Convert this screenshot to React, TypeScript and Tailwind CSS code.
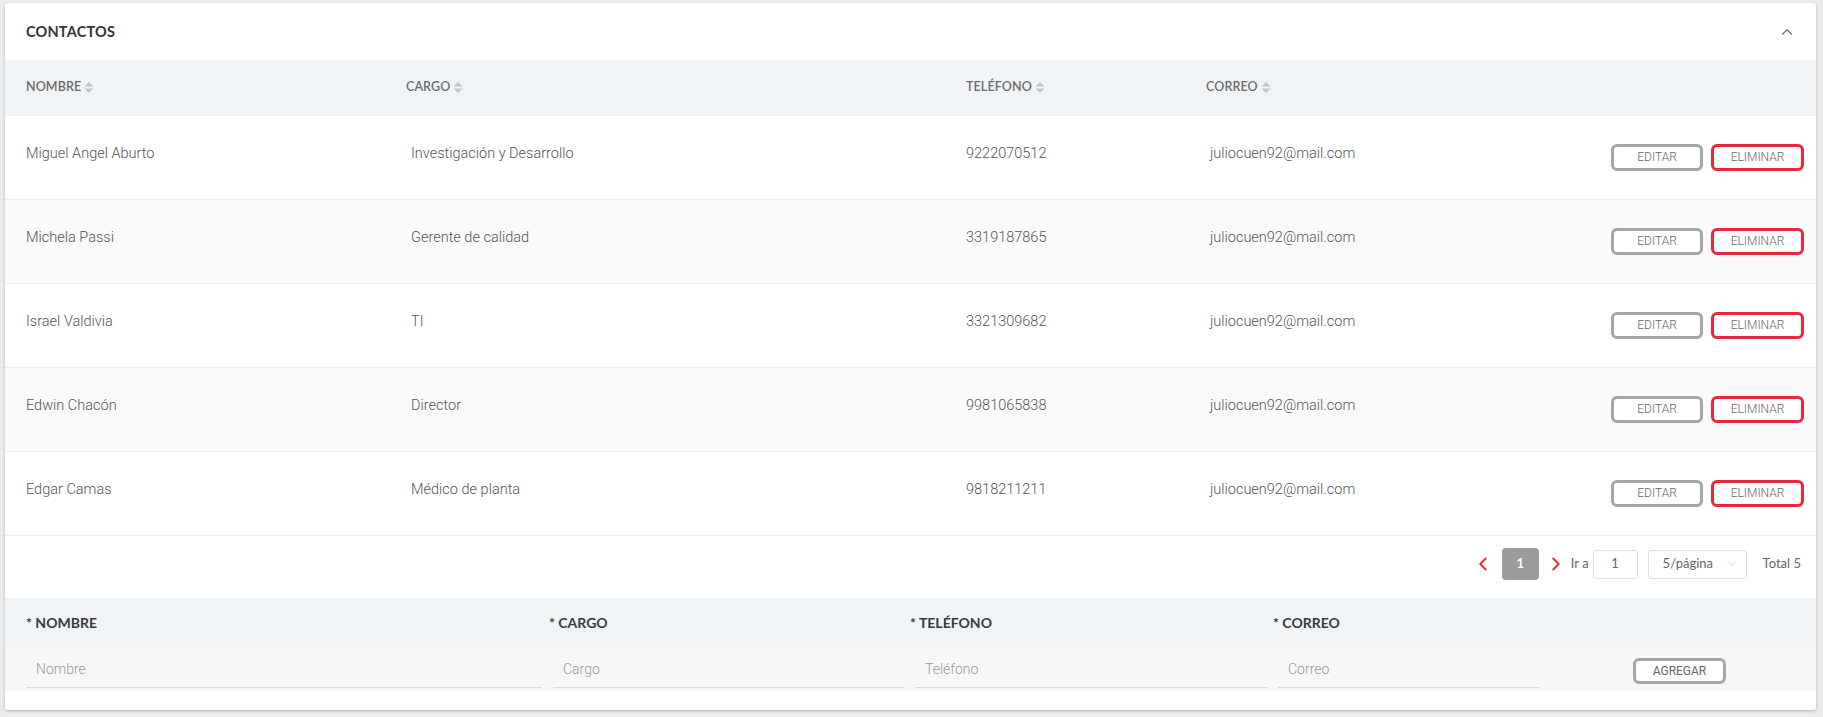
import { ChevronUp, ChevronLeft, ChevronRight, ChevronDown } from "lucide-react";

const contacts = [
  { name: "Miguel Angel Aburto", role: "Investigación y Desarrollo", phone: "9222070512", email: "juliocuen92@mail.com" },
  { name: "Michela Passi", role: "Gerente de calidad", phone: "3319187865", email: "juliocuen92@mail.com" },
  { name: "Israel Valdivia", role: "TI", phone: "3321309682", email: "juliocuen92@mail.com" },
  { name: "Edwin Chacón", role: "Director", phone: "9981065838", email: "juliocuen92@mail.com" },
  { name: "Edgar Camas", role: "Médico de planta", phone: "9818211211", email: "juliocuen92@mail.com" },
];

const cols = "grid grid-cols-[380px_560px_240px_1fr_auto]";

function SortIcon() {
  return (
    <svg width="10" height="13" viewBox="0 0 10 13" className="ml-[3px]">
      <path d="M5 1 L9.5 5.5 L0.5 5.5 Z" fill="#c0c4cc" />
      <path d="M5 12 L9.5 7.5 L0.5 7.5 Z" fill="#c0c4cc" />
    </svg>
  );
}

function HeadCell({ label }: { label: string }) {
  return (
    <div className="flex items-center text-[12.5px] font-semibold text-[#6b6b6b] tracking-[0.1px]">
      {label}
      <SortIcon />
    </div>
  );
}

function FormField({ placeholder, className }: { placeholder: string; className: string }) {
  return (
    <div className={`${className} h-[40px] border-b border-[#dcdcdc] flex items-center pl-[10px] pt-[4px]`}>
      <input
        placeholder={placeholder}
        className="w-full bg-transparent outline-none text-[14px] font-light text-[#555] placeholder:text-[#9a9a9a]"
      />
    </div>
  );
}

export default function App() {
  return (
    <div className="min-h-[717px] w-full bg-[#ebebeb] pt-[3px] pl-[5px] pr-[7px] pb-[6px] font-['Roboto',sans-serif]">
      <div className="bg-white rounded-[3px] shadow-[0_1px_3px_rgba(0,0,0,0.25)] overflow-hidden">
        {/* title */}
        <div className="h-[57px] flex items-center justify-between pl-[21px] pr-[20px]">
          <h2 className="font-['Lato',sans-serif] font-bold text-[14.5px] text-[#333] tracking-[0.2px]">CONTACTOS</h2>
          <ChevronUp size={18} strokeWidth={1.5} className="text-[#6a6a6a]" />
        </div>

        {/* table head */}
        <div className={`${cols} h-[55px] items-center bg-[#f1f4f7] pl-[21px] font-['Lato',sans-serif]`}>
          <HeadCell label="NOMBRE" />
          <HeadCell label="CARGO" />
          <HeadCell label="TELÉFONO" />
          <HeadCell label="CORREO" />
          <div />
        </div>

        {/* rows */}
        {contacts.map((c, i) => (
          <div
            key={i}
            className={`${cols} h-[84px] items-center border-t border-[#ebeef5] pl-[21px] pr-[12px] text-[14.5px] font-light text-[#555] ${
              i % 2 === 1 ? "bg-[#fafafa]" : "bg-white"
            }`}
          >
            <span className="pb-[8px]">{c.name}</span>
            <span className="pb-[8px] pl-[5px]">{c.role}</span>
            <span className="pb-[8px]">{c.phone}</span>
            <span className="pb-[8px] pl-[4px]">{c.email}</span>
            <div className="flex gap-[8px] pb-[1px]">
              <button className="w-[92px] h-[27px] rounded-[6px] border-[3px] border-[#a6a6a6] text-[12px] font-light text-[#666] bg-white">
                EDITAR
              </button>
              <button className="w-[93px] h-[27px] rounded-[6px] border-[3px] border-[#e8283c] text-[12px] font-light text-[#666] bg-white">
                ELIMINAR
              </button>
            </div>
          </div>
        ))}

        {/* pagination */}
        <div className="h-[63px] border-t border-[#ebeef5] flex items-center justify-end pr-[15px] pb-[6px] text-[13px] text-[#666] font-['Lato',sans-serif]">
          <ChevronLeft size={22} strokeWidth={2} className="text-[#e8283c]" />
          <div className="ml-[8px] w-[37px] h-[32px] rounded-[4px] bg-[#9b9b9b] text-white font-bold flex items-center justify-center">
            1
          </div>
          <ChevronRight size={22} strokeWidth={2} className="ml-[6px] text-[#e8283c]" />
          <span className="ml-[4px]">Ir a</span>
          <div className="ml-[4px] w-[45px] h-[29px] border border-[#dcdfe6] rounded-[3px] flex items-center justify-center">
            1
          </div>
          <div className="ml-[10px] w-[99px] h-[29px] border border-[#dcdfe6] rounded-[3px] flex items-center justify-between pl-[14px] pr-[8px]">
            <span>5/página</span>
            <ChevronDown size={12} strokeWidth={1.2} className="text-[#b0b0b0]" />
          </div>
          <span className="ml-[16px]">Total 5</span>
        </div>

        {/* form head */}
        <div className="grid grid-cols-[523px_361px_363px_1fr] h-[49px] items-center bg-[#f1f4f7] pl-[21px] font-['Lato',sans-serif] font-bold text-[14px] text-[#3a3a3a]">
          <span>* NOMBRE</span>
          <span>* CARGO</span>
          <span>* TELÉFONO</span>
          <span>* CORREO</span>
        </div>

        {/* form inputs */}
        <div className="h-[44px] bg-[#f7f7f7] flex items-start pt-[1px] pl-[21px]">
          <FormField placeholder="Nombre" className="w-[516px]" />
          <FormField placeholder="Cargo" className="ml-[11px] w-[351px]" />
          <FormField placeholder="Teléfono" className="ml-[11px] w-[352px]" />
          <FormField placeholder="Correo" className="ml-[11px] w-[261px]" />
          <button className="ml-[94px] mt-[10px] w-[93px] h-[26px] rounded-[6px] border-[3px] border-[#a6a6a6] text-[12px] text-[#666] bg-white">
            AGREGAR
          </button>
        </div>
        <div className="h-[19px] bg-white" />
      </div>
    </div>
  );
}
